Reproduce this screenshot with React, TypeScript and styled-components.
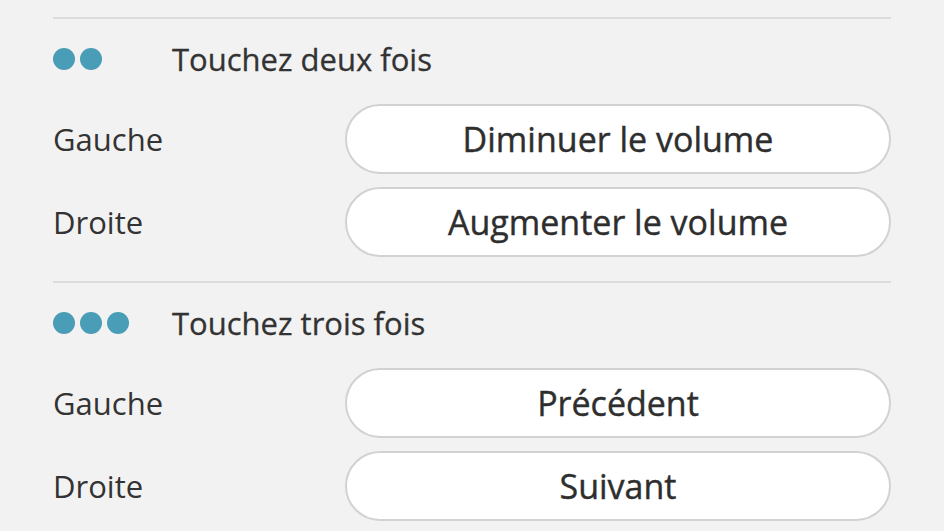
import React from "react";
import styled, { createGlobalStyle } from "styled-components";

const GlobalStyle = createGlobalStyle`
  html, body {
    margin: 0;
    padding: 0;
    background: #f2f2f2;
  }
  body {
    font-family: "Open Sans", "Lato", sans-serif;
    color: #333;
  }
`;

const Page = styled.div`
  padding: 17px 53px 0 53px;
  display: flex;
  flex-direction: column;
`;

const Section = styled.section`
  border-top: 2px solid #dcdcdc;
  padding-bottom: 24px;
`;

const Header = styled.div`
  box-sizing: border-box;
  display: flex;
  align-items: center;
  height: 85px;
  padding-bottom: 5px;
`;

const Dots = styled.div`
  width: 119px;
  display: flex;
  gap: 5px;
`;

const Dot = styled.span`
  width: 22px;
  height: 22px;
  border-radius: 50%;
  background: #4a9db6;
`;

const Title = styled.h2`
  margin: 0;
  font-size: 31px;
  font-weight: 500;
  color: #333;
  -webkit-text-stroke: 0.3px #333;
`;

const Rows = styled.div`
  display: flex;
  flex-direction: column;
  gap: 13px;
`;

const Row = styled.div`
  display: flex;
  align-items: center;
`;

const Label = styled.span`
  width: 292px;
  font-size: 31px;
  color: #333;
`;

const ActionButton = styled.button`
  flex: 1;
  height: 70px;
  border: 2px solid #d2d2d2;
  border-radius: 35px;
  background: #fff;
  font-family: inherit;
  font-size: 34px;
  font-weight: 500;
  color: #2e2e2e;
  -webkit-text-stroke: 0.4px #2e2e2e;
  padding: 0;
`;

type Gesture = {
  taps: number;
  title: string;
  left: string;
  right: string;
};

const gestures: Gesture[] = [
  { taps: 2, title: "Touchez deux fois", left: "Diminuer le volume", right: "Augmenter le volume" },
  { taps: 3, title: "Touchez trois fois", left: "Précédent", right: "Suivant" },
];

export default function App() {
  return (
    <>
      <GlobalStyle />
      <Page>
        {gestures.map((g) => (
          <Section key={g.title}>
            <Header>
              <Dots>
                {Array.from({ length: g.taps }).map((_, i) => (
                  <Dot key={i} />
                ))}
              </Dots>
              <Title>{g.title}</Title>
            </Header>
            <Rows>
              <Row>
                <Label>Gauche</Label>
                <ActionButton>{g.left}</ActionButton>
              </Row>
              <Row>
                <Label>Droite</Label>
                <ActionButton>{g.right}</ActionButton>
              </Row>
            </Rows>
          </Section>
        ))}
      </Page>
    </>
  );
}
